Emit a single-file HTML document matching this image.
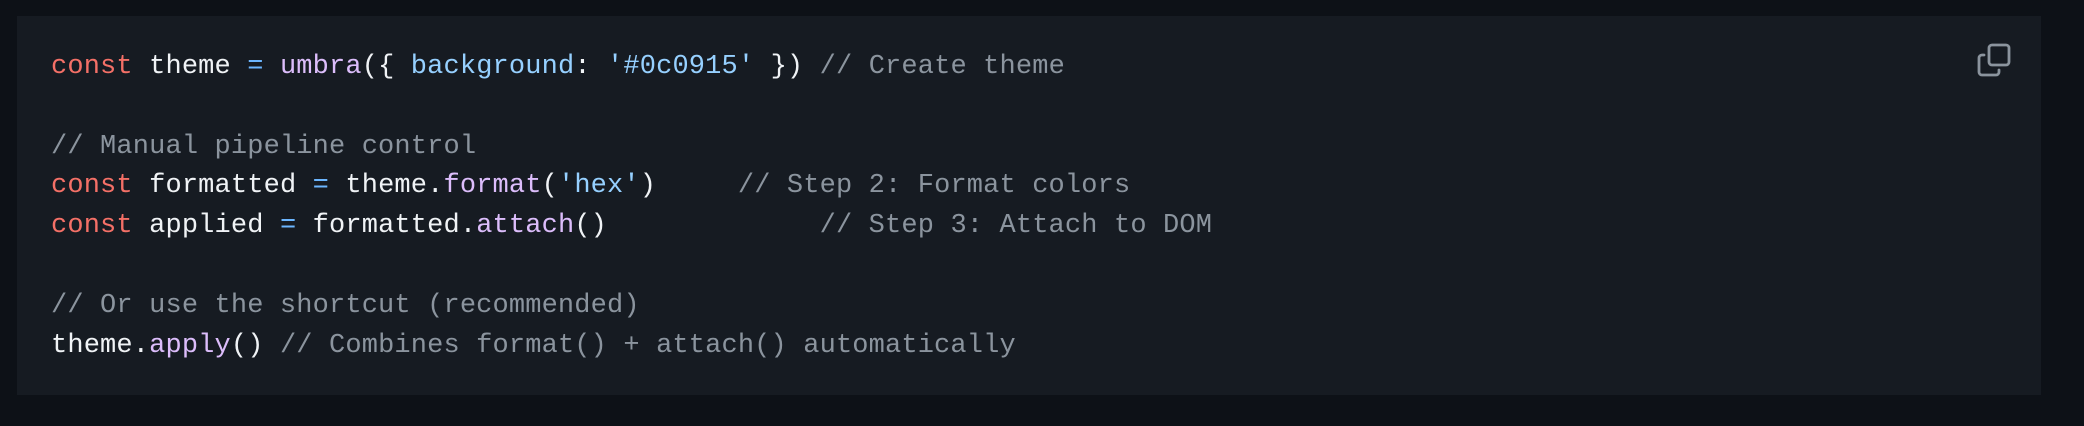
<!DOCTYPE html>
<html><head><meta charset="utf-8"><style>
html,body{margin:0;padding:0;width:2084px;height:426px;background:#0d1117;overflow:hidden}
.panel{position:absolute;left:17px;top:16px;width:2024px;height:379px;background:#161b22}
pre{position:absolute;left:51px;top:48px;margin:0;font-family:"Liberation Mono","DejaVu Sans Mono",monospace;font-size:27px;letter-spacing:0.15px;line-height:39.8px;color:#f0f3f6}
.k{color:#f47067}.o{color:#6cb6ff}.f{color:#dcbdfb}.p{color:#96d0ff}.s{color:#96d0ff}.c{color:#8b949e}
svg{position:absolute;left:1977px;top:43px}
</style></head><body>
<div class="panel"></div>
<pre><span class="k">const</span> theme <span class="o">=</span> <span class="f">umbra</span>({ <span class="p">background</span>: <span class="s">'#0c0915'</span> }) <span class="c">// Create theme</span>

<span class="c">// Manual pipeline control</span>
<span class="k">const</span> formatted <span class="o">=</span> theme.<span class="f">format</span>(<span class="s">'hex'</span>)     <span class="c">// Step 2: Format colors</span>
<span class="k">const</span> applied <span class="o">=</span> formatted.<span class="f">attach</span>()             <span class="c">// Step 3: Attach to DOM</span>

<span class="c">// Or use the shortcut (recommended)</span>
theme.<span class="f">apply</span>() <span class="c">// Combines format() + attach() automatically</span></pre>
<svg width="34" height="34" viewBox="0 0 34 34" fill="none" stroke="#8b949e" stroke-width="2.8" stroke-linecap="round" stroke-linejoin="round">
<rect x="12" y="2" width="20" height="20" rx="3"/>
<path d="M7 12 H5 a3 3 0 0 0 -3 3 V29 a3 3 0 0 0 3 3 H19 a3 3 0 0 0 3 -3 V27"/>
</svg>
</body></html>
